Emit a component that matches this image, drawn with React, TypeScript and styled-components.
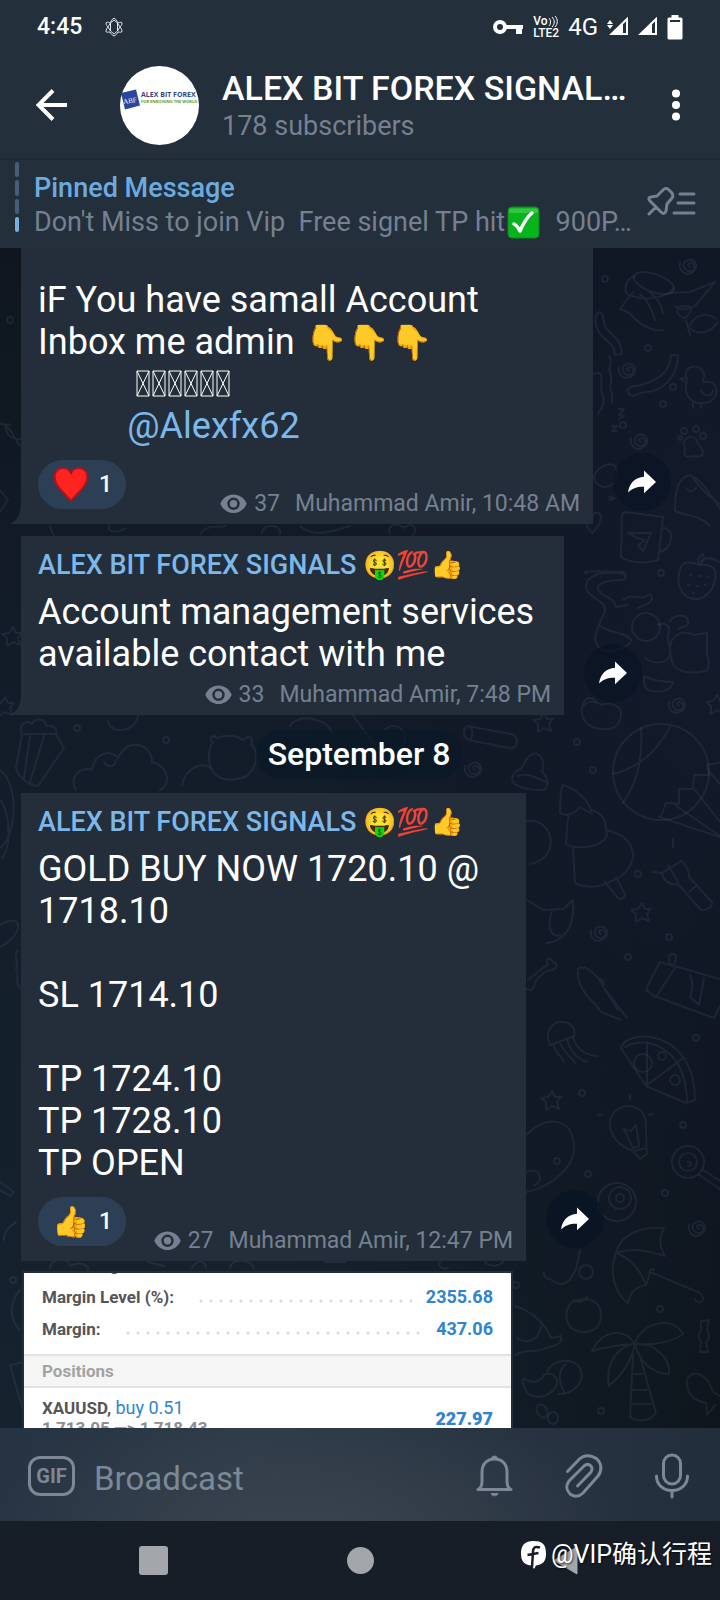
import React from "react";
import styled, { createGlobalStyle, css } from "styled-components";

const color = {
  bar: "#242f3c",
  bubble: "#232e3a",
  accent: "#7cb8ea",
  muted: "#758190",
  text: "#ffffff",
};

const Global = createGlobalStyle`
  *, *::before, *::after { box-sizing: border-box; }
  body {
    margin: 0;
    background: #171e28;
    color: ${color.text};
    font-family: Roboto, "Noto Sans CJK SC", "Noto Color Emoji", sans-serif;
  }
  h1, h2, p, dl, dd, dt { margin: 0; font: inherit; }
  svg { display: block; flex: none; }
`;

const plainButton = css`
  border: 0;
  padding: 0;
  background: none;
  color: inherit;
  font: inherit;
  display: grid;
  place-items: center;
  flex: none;
`;

const Screen = styled.div`
  min-height: 100vh;
  display: flex;
  flex-direction: column;
  background: ${color.bar};
`;

/* ---------- status bar ---------- */

const StatusBar = styled.div`
  height: 54px;
  padding: 0 37px;
  display: flex;
  align-items: center;
  gap: 23px;
`;

const Clock = styled.time`
  font-size: 23px;
  line-height: 26px;
  font-weight: 500;
`;

const StatusIcons = styled.div`
  margin-left: auto;
  display: flex;
  align-items: center;
  gap: 9px;
  font-size: 24px;
  line-height: 28px;
`;

/* ---------- channel header ---------- */

const ChannelBar = styled.header`
  height: 104px;
  padding: 0 39px 2px 36px;
  display: flex;
  align-items: center;
`;

const IconButton = styled.button`
  ${plainButton}
`;

const Avatar = styled.svg`
  margin-left: 53px;
`;

const ChannelTitles = styled.div`
  flex: 1;
  min-width: 0;
  margin-left: 23px;
  display: flex;
  flex-direction: column;
`;

const ChannelName = styled.h1`
  font-size: 34px;
  line-height: 42px;
  font-weight: 500;
  white-space: nowrap;
`;

const ChannelInfo = styled.p`
  font-size: 27px;
  line-height: 34px;
  color: ${color.muted};
`;

const PinnedBar = styled.section`
  height: 90px;
  padding: 2px 24px 0 15px;
  border-top: 2px solid #1f2934;
  display: flex;
  align-items: center;
  gap: 15px;
`;

const PinnedMarks = styled.div`
  width: 4px;
  align-self: stretch;
  padding-bottom: 16px;
  display: flex;
  flex-direction: column;
  gap: 3px;
`;

const PinnedMark = styled.i<{ $active?: boolean }>`
  flex: 1;
  border-radius: 2px;
  background: ${(p) => (p.$active ? "#76b0e2" : "#435f79")};
`;

const PinnedText = styled.div`
  flex: 1;
  min-width: 0;
  font-size: 27px;
  line-height: 34px;
`;

const PinnedTitle = styled.h2`
  color: #6cabdf;
  font-weight: 500;
`;

const PinnedPreview = styled.p`
  color: ${color.muted};
  white-space: pre;
  display: flex;
  align-items: center;
  gap: 2px;
`;

const PinnedListButton = styled.button`
  ${plainButton}
  padding-bottom: 6px;
`;

/* ---------- conversation ---------- */

const Chat = styled.main`
  position: relative;
  isolation: isolate;
  flex: 1 0 1180px;
  height: 1180px;
  overflow: hidden;
  padding-left: 21px;
  display: flex;
  flex-direction: column;
  background:
    radial-gradient(ellipse 60% 70% at 100% 30%, #131a2b, transparent),
    linear-gradient(90deg, transparent 40%, #0e151d 100%),
    linear-gradient(180deg, #0f161f 0%, #121c28 35%, #15232f 100%);
`;

const Wallpaper = styled.svg`
  position: absolute;
  top: 0;
  left: 0;
  width: 100%;
  height: 100%;
  z-index: -1;
  fill: none;
  stroke: #8695b4;
  stroke-opacity: 0.11;
  stroke-width: 2;
  stroke-linecap: round;
  stroke-linejoin: round;
`;

const MessageRow = styled.article`
  display: flex;
  align-items: flex-end;
  gap: 20px;
  margin-bottom: 12px;
`;

const Bubble = styled.div<{ $width: number; $top?: number }>`
  position: relative;
  width: ${(p) => p.$width}px;
  max-width: calc(100% - 100px);
  padding: ${(p) => p.$top ?? 13}px 13px 6px 17px;
  background: ${color.bubble};
`;

const Tail = styled.svg`
  position: absolute;
  left: -10px;
  bottom: 0;
  fill: ${color.bubble};
`;

const Sender = styled.h2`
  margin-bottom: 10px;
  font-size: 27px;
  line-height: 32px;
  font-weight: 500;
  color: ${color.accent};
  white-space: nowrap;
`;

const Body = styled.p`
  font-size: 36px;
  line-height: 42px;
  white-space: pre-wrap;
`;

const InlineEmoji = styled.span`
  margin-left: 2px;
  font-size: 34px;
  line-height: 34px;
`;

const MissingGlyphs = styled.svg`
  display: inline-block;
  vertical-align: -1px;
`;

const Mention = styled.a`
  color: ${color.accent};
  text-decoration: none;
`;

const Footer = styled.footer`
  margin-top: 6px;
  display: flex;
  align-items: flex-end;
  justify-content: flex-end;
`;

const Reaction = styled.button`
  ${plainButton}
  grid-auto-flow: column;
  gap: 9px;
  height: 49px;
  padding: 0 14px;
  margin: 7px auto 9px 0;
  border-radius: 25px;
  background: #2c3f54;
  font-size: 23px;
  line-height: 28px;
  font-weight: 500;
`;

const ReactionEmoji = styled.span`
  width: 38px;
  font-size: 30px;
  line-height: 36px;
`;

const Meta = styled.div`
  display: flex;
  align-items: center;
  gap: 7px;
  font-size: 23px;
  line-height: 28px;
  color: ${color.muted};
  white-space: nowrap;
`;

const Author = styled.span`
  margin-left: 8px;
`;

const ShareButton = styled.button`
  ${plainButton}
  width: 58px;
  height: 58px;
  margin-bottom: 13px;
  border-radius: 50%;
  background: rgba(9, 20, 36, 0.7);
`;

const DateChip = styled.time`
  align-self: center;
  margin: 3px 23px 14px 0;
  padding: 0 12px;
  border-radius: 24px;
  background: rgba(9, 24, 40, 0.65);
  font-size: 32px;
  line-height: 49px;
  font-weight: 500;
`;

/* ---------- attached trading statement ---------- */

const Statement = styled.figure`
  width: 491px;
  max-width: calc(100% - 100px);
  margin: -2px 0 0 1px;
  border: 2px solid ${color.bubble};
  border-bottom: 0;
  flex: 1;
  overflow: hidden;
  background: #fff;
  color: #555;
  font-size: 17px;
  line-height: 32px;
  font-weight: 700;
`;

const Summary = styled.dl`
  margin-top: -24px;
  padding: 0 18px 9px;
  border-bottom: 2px solid #e2e2e2;
`;

const SummaryRow = styled.div`
  display: flex;
`;

const Leader = styled.span`
  flex: 1;
  margin: 0 14px 0 22px;
  background: radial-gradient(circle, #dcdcdc 1px, transparent 2px) 0 4px / 10px 32px;
`;

const Amount = styled.dd`
  color: #2f84d0;
  font-size: 18px;
`;

const PositionsTitle = styled.h2`
  padding: 0 18px;
  background: #f5f5f5;
  border-bottom: 2px solid #e2e2e2;
  color: #a3a3a3;
  line-height: 30px;
`;

const Position = styled.div`
  padding: 10px 18px;
  display: flex;
  justify-content: space-between;
  line-height: 20px;
`;

const Side = styled.span`
  color: #2f84d0;
  font-weight: 400;
  font-size: 18px;
`;

const Prices = styled.p`
  color: #8d8d8d;
`;

const Profit = styled.strong`
  padding-top: 11px;
  color: #2f84d0;
  font-size: 18px;
`;

/* ---------- composer and navigation ---------- */

const Composer = styled.form`
  height: 93px;
  padding: 2px 31px 0 28px;
  display: flex;
  align-items: center;
  color: #7c8895;
  background:
    radial-gradient(ellipse 45% 150% at 42% 120%, #3b444f, transparent),
    linear-gradient(90deg, #263342, #2d3a48 35%, #232e3c);
`;

const GifButton = styled.button`
  ${plainButton}
  width: 47px;
  height: 40px;
  border: 3px solid currentColor;
  border-radius: 12px;
  font-size: 20px;
  line-height: 24px;
  font-weight: 700;
`;

const MessageInput = styled.input`
  flex: 1;
  min-width: 0;
  margin: 0 19px;
  padding: 6px 0 0;
  border: 0;
  outline: 0;
  background: none;
  color: ${color.text};
  font: 400 33px/40px Roboto, sans-serif;
  &::placeholder { color: #7c8895; opacity: 1; }
`;

const ComposerActions = styled.div`
  display: flex;
  align-items: center;
  gap: 52px;
`;

const NavBar = styled.nav`
  position: relative;
  height: 79px;
  padding: 0 7%;
  display: flex;
  align-items: center;
  background: #171e28;
`;

const NavButton = styled.button`
  ${plainButton}
  flex: 1;
  color: #a3a6ab;
`;

const Credit = styled.div`
  position: absolute;
  right: 8px;
  top: 16px;
  display: flex;
  align-items: center;
  gap: 5px;
  font-size: 25px;
  line-height: 36px;
  text-shadow: 1px 1px 2px rgba(0, 0, 0, 0.7);
`;

/* ---------- drawings ---------- */

const Eye = () => (
  <svg width="27" height="20" viewBox="0 0 27 20" aria-hidden="true">
    <path fillRule="evenodd" fill="currentColor" d="M13.500 .5C7.500 .5 2.500 4.200 .3 9.700c2.200 5.500 7.200 9.300 13.200 9.300s11-3.800 13.200-9.300C24.500 4.200 19.500 .5 13.500 .5Zm0 15.500a6.200 6.200 0 1 1 0-12.400 6.200 6.200 0 0 1 0 12.400Z" />
    <circle cx="13.500" cy="9.800" r="3.700" fill="currentColor" />
  </svg>
);

const Heart = () => (
  <svg width="38" height="37" viewBox="0 0 38 37" aria-label="heart">
    <path d="M19 35C13 27.500 2.500 20 2.500 11 2.500 5.500 6.300 2 10.800 2c3.500 0 6.500 1.800 8.200 5 1.700-3.200 4.700-5 8.200-5 4.500 0 8.300 3.500 8.300 9C35.500 20 25 27.500 19 35Z" fill="#ff2420" stroke="#ad1220" strokeWidth="2" />
  </svg>
);

const CheckMark = () => (
  <svg width="33" height="33" viewBox="0 0 33 33" aria-label="check mark">
    <rect x="1" y="1" width="31" height="31" rx="4" fill="#06b51c" stroke="#0b8a17" strokeWidth="1" />
    <path d="M3 2.500h27a2 2 0 0 1 1 2V7H2V4.500a2 2 0 0 1 1-2Z" fill="#4ed35c" opacity=".6" />
    <path d="M7 18c2.500 1 4 3.500 6 7C16 18 19.500 11.500 25 7" fill="none" stroke="#fff" strokeWidth="3.500" strokeLinecap="round" strokeLinejoin="round" />
  </svg>
);

const ShareArrow = () => (
  <svg width="30" height="26" viewBox="0 0 30 26" aria-hidden="true">
    <path d="M17 1.500v6.300C8 8.500 2.500 14 1 23.500c4-4 9-6 16-5.800v6.500L29 13 17 1.500Z" fill="#fff" />
  </svg>
);

const Flower = () => (
  <svg width="18" height="20" viewBox="0 0 18 20" fill="none" stroke="#dfe6ee" strokeWidth="1" aria-hidden="true">
    <path d="M9 1C6 3 6 5 5 6 3 5 1 5 1 6c0 2 1 3 2 4-1 1-2 3-2 4 0 2 2 1 4 1 1 2 2 3 4 4 2-1 3-2 4-4 2 0 4 1 4-1 0-1-1-3-2-4 1-1 2-2 2-4 0-1-2-1-4 0-1-1-1-3-4-5Z" />
    <path d="M9 3 5.500 6v8L9 17l3.500-3V6ZM3 10l2.500-4M3 10l2.500 4M15 10l-2.500-4M15 10l-2.500 4" />
  </svg>
);

const KeyIcon = () => (
  <svg width="31" height="15" viewBox="0 0 31 15" aria-hidden="true">
    <circle cx="7" cy="7" r="5" fill="none" stroke="#fff" strokeWidth="4" />
    <path d="M12 5h18v4h-1v5h-6V9H12Z" fill="#fff" />
  </svg>
);

const VolteMark = styled.span`
  display: grid;
  font-size: 12px;
  line-height: 11px;
  font-weight: 500;
`;

const VolteTop = styled.span`
  display: flex;
`;

const SignalIcon = ({ data }: { data?: boolean }) => (
  <svg width={data ? 22 : 20} height="20" viewBox={data ? "-3 0 22 20" : "-1 0 20 20"} aria-hidden="true">
    <path d="M17 2v15H1.500Z" fill="none" stroke="#fff" strokeWidth="2" />
    <path d="M13 5.500V18H1Z" fill="#fff" />
    {data && <path d="m0 3 3 4h-6Zm0 9 3-4h-6Z" fill="#fff" />}
  </svg>
);

const BatteryIcon = () => (
  <svg width="16" height="25" viewBox="0 0 16 25" aria-hidden="true">
    <path d="M4.500 0h7v2.500H14a1.500 1.500 0 0 1 1.500 1.500v19A1.500 1.500 0 0 1 14 24.500H2A1.500 1.500 0 0 1 .5 23V4A1.500 1.500 0 0 1 2 2.500h2.500Z" fill="#fff" />
    <path d="M3 6h10" stroke="#242f3c" strokeWidth="2" />
  </svg>
);

const dot = (x: number, y: number) => <circle key={`${x}-${y}`} cx={x} cy={y} r="3" />;
const spiral = (x: number, y: number) => (
  <path key={`${x}-${y}`} transform={`translate(${x} ${y})`} d="M0 2c-3-1-2-5 1-4 5 1 4 8-1 8-7 0-8-8-4-10 5-4 11 1 10 6-1 6-8 8-12 6-3-2-5-5-4-10" />
);
const star = (x: number, y: number) => (
  <path key={`${x}-${y}`} transform={`translate(${x} ${y})`} d="m1-9 3 6 6 0-4 5 2 7-7-3-6 4 0-8-5-4 7-1Z" />
);

const Doodles = () => (
  <Wallpaper viewBox="0 248 720 1180" preserveAspectRatio="xMaxYMin slice" aria-hidden="true">
    {[[605, 279], [648, 348], [673, 387], [663, 404], [623, 425], [661, 573], [577, 742], [593, 770], [628, 957], [669, 937], [696, 1038], [582, 1093], [683, 1125], [557, 1161], [588, 1174], [665, 1193], [660, 1309], [601, 1411], [77, 728], [166, 740], [516, 1285], [638, 874], [10, 320], [13, 1280]].map(([x, y]) => dot(x, y))}
    {[[690, 265], [629, 369], [641, 440], [679, 704], [475, 768], [601, 932], [699, 1227]].map(([x, y]) => spiral(x, y))}
    {[[543, 722], [641, 912], [551, 1100], [716, 704], [12, 636], [4, 706]].map(([x, y]) => star(x, y))}

    {/* hat and bird */}
    <ellipse cx="654" cy="283" rx="21" ry="9" transform="rotate(20 654 283)" />
    <path d="M634 276c-10 5-12 18-2 20 15 5 35 2 42-8M633 292l-13 17c6 2 11 4 14 9 8 8 20 14 30 12M640 294c8 6 12 16 15 26M650 292c6 6 12 12 13 21M668 293l22-1 25-10-20 24c-10 5-16 4-20 0M690 325c6-12 18-12 26-6M684 318c-10-3-8-15 0-11 7-5 11 6 0 11ZM688 326c8 10 22 8 30-4M686 320l4 15" />
    {/* streamers */}
    <path d="M597 313c8-4 5 10 9 15 6 8 15 10 16 26l-7 1c0-12-10-14-15-21-5-8-6-15-3-21ZM609 356c5 8-2 10 1 17 4 8-2 11 1 18 4 5-1 8 1 12M671 355l7 0c0 24-18 37-33 37-9 1-10 6-15 3l-3-5c5-6 11-3 17-6 13-4 26-11 27-29ZM594 374c12-6 5 12 8 20 5 9-2 16-4 20" />
    {/* chick */}
    <path d="M687 379c-6-14 14-17 17-5 1 5-3 7 0 8 14-3 17 14 5 20-11 4-20-1-23-10-1-6 0-9 1-13ZM686 378l-6 1 5 3M701 391c5 7 11 5 12-1M693 403v5M701 403v5" />
    <path d="m619 409 5 0-5 6 5 1-5 3M612 426h5l-5 5h5" />
    {/* paw */}
    <path d="M684 442c3-7 13-6 13 0l6 9c0 8-6 5-10 5-5 2-11 0-8-6Z" />
    <circle cx="684" cy="431" r="3" /><circle cx="696" cy="429" r="3" /><circle cx="703" cy="436" r="3" /><circle cx="680" cy="438" r="2" />
    {/* fish and whale */}
    <path d="M594 476c6-12 17-14 22-9 2 12-3 20-12 20-6-1-10-5-10-11ZM609 497l6 1-5 2M675 511c0-21 3-34 15-36 14 6 21 22 30 33M675 511c10 5 24 3 35 15M687 489c3 4 7 2 9-1M692 476c8 14 18 20 28 28" />
    {/* mug */}
    <path d="m622 514 3-2 38 5-5 43c-12 4-28 3-37-3ZM662 528c14-1 11 22-3 24M628 533l23 0-8 18-5-6 7-5-8-2ZM592 533c-8-8-6-15 0-16 3-7 8-5 9 0-1 8-5 12-9 16Z" />
    {/* strawberry */}
    <path d="M681 567c4-7 12-4 19-2 12-1 18 4 15 14-2 14-12 21-22 20-15-3-17-20-12-32ZM699 564c-2-4 0-8 4-10 2 5 0 9-4 10Zm0 0c6-9 14-6 20-2M690 575h1m8 1h1m7 1h1m-20 8h1m8 1h1m7-1h1m-13 8h1" />
    {/* playing cats */}
    <path d="M624 574c-18-4-38 0-38 13 2 12 20 12 19 24-9 20-14 30-5 37 10 8 32-2 31-8-4-8-25-8-31-14M587 573c-8-2 5-2 37-1 3 3 1 8-2 8-12 0-26 2-24 10 4 8 15 5 18 17l12-2M623 600c6-6 14-2 22-3 4-4 7-3 7 2-2 6-10 7-14 9" />
    <circle cx="646" cy="627" r="14" />
    <path d="M658 625c8-4 14 2 10 10-2 8 4 10 2 20-4 10-17 9-25 3M672 640c8-10 14-8 22-5l13-2v21c3 8 2 15-1 17-14 3-30 2-34-9-2-8-3-17 0-22ZM670 622c2-8 16-8 18-2 1 8-6 6-10 9M644 676c8 4 16 6 29 6-2 9-12 11-20 9-8 0-10-8-9-15Z" />
    {/* fruit and log */}
    <path d="M582 707c5-7 14-6 20-2 9-3 20 0 19 11-2 12-10 14-20 13-13-1-21-10-19-22ZM583 704c3-8 9-7 13-3M468 726l42 8c9 0 10 16-1 14l-40-8c-7-2-6-13-1-14ZM468 726c6 1 5 13 1 14" />
    {/* bell */}
    <path d="M536 753c-10 2-11 10-15 16-10 2-11 13-5 16 10 5 20 5 29 5 4-7 3-13-3-18 3-8 2-14-6-19ZM518 776c8-4 18 2 28 6" />
    {/* balloon */}
    <circle cx="661" cy="772" r="48" />
    <path d="M641 728c2 28-3 54-18 75M613 774c27-7 43-22 57-47M661 816l5-13 13 1 0-15h14l1-14h15l-2-10 12-2M659 817l61 20M675 805l45 31M695 790l25 32M708 770l12 14" />
    {/* tree */}
    <path d="M563 785c-4 8-2 20-3 28 7 4 14 1 20-6l12 7c-2-14-18-26-29-29ZM569 814c-2 8-2 20-3 30 12 6 34 4 41-8l-2-14c-2-7-7-9-12-12M573 848l2 35c12 6 28 4 36-2 12-3 22-15 22-27-2-15-12-20-27-24M605 882l13 16c4 3 7-1 7-4l-9-17M527 821c28-3 34 38 3 43" />
    {/* torch */}
    <path d="m662 873 19-12c5 3 8 10 8 16l23 25c1 5-6 9-11 8l-23-26c-8 2-15-4-16-11ZM668 865l10 17M697 885l-8 7M673 847v-8M661 873l-8-1" />
    {/* cat face, bone, squid */}
    <path d="M527 900l16 10 20-1 10-9c2 24-7 42-27 43M552 911c-6 18 0 27 9 24M528 980l20-16c-4-6 3-7 5-2 4 1 5 5 0 8-5 0-8 0-18 12-1 9-6 9-8 7M578 969c4-5 18 2 26 19l23 30M578 969c-2 12 5 24 18 36l5 7 20 8M604 988l14 22M598 978c4 2 6 4 6 6" />
    {/* jellyfish */}
    <path d="M550 1045c-6-14 3-25 14-23 7 1 12 7 10 14ZM554 1045c0 8 7 9 10 17M560 1043c3 8 9 12 15 20M567 1040c3 10 8 18 20 22M573 1037c4 14 14 18 24 19" />
    {/* present */}
    <path d="M660 962c-5 10-10 18-14 28l8 6 60 22 6-12M660 962l60 17M656 997l20-31M672 966c-6-8-2-14 2-12 4 2 2 8-2 12ZM690 975c4 8 2 16 0 22l9 8 5-27" />
    {/* pizza */}
    <path d="M621 1048c6-20 74-20 74 52l-9 3-40-17ZM625 1047c14-10 60-7 62 54M647 1042v43l35-26" /><circle cx="643" cy="1063" r="9" /><circle cx="675" cy="1080" r="5" /><circle cx="662" cy="1056" r="4" />
    {/* light bulb */}
    <path d="M610 1126c-2-24 35-28 36-2 0 11 0 18 1 30l-7 5-7-8c-11-4-21-12-23-25ZM624 1129l9 19 6-2-3-21-5 6ZM634 1151l12-3M602 1115h-4M630 1100v-5M649 1115l4-1" />
    {/* potato, lollipop, sweet */}
    <path d="M527 1134c22-20 44-15 47 10 2 24-24 43-47 48M527 1172c12-6 18 8 8 13" />
    <circle cx="688" cy="1162" r="16" /><circle cx="688" cy="1162" r="9" /><path d="m703 1170 17 11M699 1175l21 14M688 1162c4-2 4 4 0 4" />
    <circle cx="617" cy="1202" r="19" /><circle cx="620" cy="1198" r="11" /><circle cx="620" cy="1198" r="4" />
    {/* yo-yo and umbrella */}
    <path d="M580 1250l-4 19c-8 20-18 16-26 10-6-1-6-4-6-7" /><circle cx="586" cy="1272" r="7" />
    <path d="M616 1253c4-18 24-27 48-25-6 12-4 20 1 28-22-7-36-8-49-3ZM616 1253c-8 20 0 42 12 50 3-12 8-16 18-18-6-15-14-26-30-32ZM646 1285c6-14 2-18 8-15M650 1272l50 21c8 8-2 13-5 6" />
    {/* tomato, whale, palm */}
    <path d="M571 1303c10-6 29-6 30 11 0 15-10 19-20 18-16-2-18-20-10-29ZM573 1300l8 2 6-5M515 1306c18 6 30 18 36 32l10-2c2 9-8 10-15 12-10 6-20 0-31 7M517 1338c8 6 22 4 24-12" />
    <path d="M635 1344c-10-16-32-15-43 7 12-4 26-6 43-7Zm0 0c4-20 38-30 48-10-10 8-32 12-48 10Zm0 0c-18 2-30 20-26 42 12-10 22-24 26-42Zm0 0c16-2 36 12 34 30-16 0-30-12-34-30ZM633 1355l-3 62c8 6 20 4 26-4l-17-60M632 1374h10M631 1390h16M631 1404h20" />
    {/* croissants, sweets, fish */}
    <path d="M525 1379c8 6 16 2 20-5 10-2 15 6 10 14-8 12-32 14-32-9ZM547 1372c4-12 25-16 33-4 6 14-6 26-22 26M566 1364c-10 8-6 20-2 28M701 1321l8-1-2 10c4 6 2 10-1 12l2 10h-8l1-10c-4-6-3-8 0-11ZM688 1377c10-8 20 0 25 15l7 4M688 1377c-4 16 6 24 18 26l1 12 8-10" />
    <ellipse cx="542" cy="1411" rx="5" ry="7" transform="rotate(-30 542 1411)" /><ellipse cx="553" cy="1418" rx="5" ry="6" />

    {/* popcorn, trees and bear between the bubbles, then the left margin */}
    <path d="M22 734c-4-8 4-16 10-10 4-8 14-4 14 2 8-2 12 4 10 8l8 14-26 38c-12-2-20-10-22-18l6-34ZM24 734l32 0M30 736l-6 42M44 736l-14 46M108 721c2 14 28 12 30-6M76 790c-8-14 6-24 16-20 2-16 18-22 26-12 10-22 34-14 34 4 16 4 20 22 8 28M116 760c-2 10-10 6-12 2M213 742c-6-4 0-8 4-4 12-4 20-2 26 2 6-6 12-2 8 4 10 10 4 24-4 32-20 8-32 2-36-8-4-12-2-20 2-26ZM182 785c4-18 20-24 30-16M290 726c6-12 34-10 42 6M352 714l22 30M384 730c12-10 24 0 20 14" />
    <path d="M10 425c-6-6-8 16 12 14M0 424c8-2 14 14 20 22M0 490l8 10-8 12M0 770c20 14 16 68 0 78M0 800c10 12 12 46 2 58M0 925c24-14 24 10 0 22M18 950c-6 8 2 10-2 18 4 8-2 14 4 20M0 1182l14 10-4 4-10-6M4 1240c0-12 8-14 12-18M20 1290c-12 14-10 30 0 40M10 1365l20-4M10 1365l12 42" />
    <path d="M50 526c2 8 4 12 14 16M110 524c-6 8 8 10 16 4M200 534c8-10 14-6 26-8M262 534c0-12 20-10 18 0M300 526c10 8 20 10 50 0M390 534c-4-10 8-12 14-6 8-8 16 2 8 8M50 1268c2-12 20-10 20-2 10-6 20 0 18 4M148 1262l16 4M192 1268c4-8 14-8 14 0M230 1268c2-10 20-10 24 0M325 1262h20M440 1262c-2 4 2 8 8 6M485 1262c6 6 14 4 18 0" />
  </Wallpaper>
);

const BubbleTail = () => (
  <Tail width="11" height="22" viewBox="0 0 11 22" aria-hidden="true">
    <path d="M10 0h1v22H0v-1C7 18 10 11 10 0Z" />
  </Tail>
);

const Stats = ({ views, time }: { views: number; time: string }) => (
  <Meta>
    <Eye />
    <span>{views}</span>
    <Author>Muhammad Amir, {time}</Author>
  </Meta>
);

const Share = () => (
  <ShareButton type="button" aria-label="Share message">
    <ShareArrow />
  </ShareButton>
);

const senderName = "ALEX BIT FOREX SIGNALS 🤑💯👍";

export default function App() {
  return (
    <Screen>
      <Global />
      <StatusBar>
        <Clock>4:45</Clock>
        <Flower />
        <StatusIcons>
          <KeyIcon />
          <VolteMark>
            <VolteTop>
              Vo
              <svg width="11" height="12" viewBox="0 0 11 12" fill="none" stroke="#fff" strokeWidth="1" aria-hidden="true">
                <path d="M1 2c2 2 2 6 0 8M4 1c3 3 3 7 0 10M7 0c3 3 3 8 0 11" />
              </svg>
            </VolteTop>
            <span>LTE2</span>
          </VolteMark>
          <span>4G</span>
          <SignalIcon data />
          <SignalIcon />
          <BatteryIcon />
        </StatusIcons>
      </StatusBar>

      <ChannelBar>
        <IconButton type="button" aria-label="Back">
          <svg width="31" height="32" viewBox="0 0 31 32" fill="none" stroke="#fff" strokeWidth="4" aria-hidden="true">
            <path d="M31 16H3M17 1.500 2.500 16 17 30.500" />
          </svg>
        </IconButton>
        <Avatar width="79" height="79" viewBox="0 0 79 79" role="img" aria-label="Channel logo">
          <circle cx="39.500" cy="39.500" r="39.500" fill="#fff" />
          <path d="m1 27 15-3.500 4 16-15 4Z" fill="#2b479d" />
          <text x="3" y="37" fontSize="7" fontFamily="Liberation Serif, serif" fill="#fff" transform="rotate(-8 10 34)">ABF</text>
          <text x="21" y="31" fontSize="7" fontWeight="700" fontFamily="Open Sans, sans-serif" fill="#37457f">ALEX BIT FOREX</text>
          <text x="21" y="37" fontSize="4" fontWeight="700" fontFamily="Open Sans, sans-serif" fill="#46a03c">FOR ENRICHING THE WORLD</text>
        </Avatar>
        <ChannelTitles>
          <ChannelName>ALEX BIT FOREX SIGNAL…</ChannelName>
          <ChannelInfo>178 subscribers</ChannelInfo>
        </ChannelTitles>
        <IconButton type="button" aria-label="More options">
          <svg width="10" height="32" viewBox="0 0 10 32" fill="#fff" aria-hidden="true">
            <circle cx="5" cy="4.500" r="4" /><circle cx="5" cy="16" r="4" /><circle cx="5" cy="27.500" r="4" />
          </svg>
        </IconButton>
      </ChannelBar>

      <PinnedBar>
        <PinnedMarks>
          <PinnedMark /><PinnedMark /><PinnedMark /><PinnedMark $active />
        </PinnedMarks>
        <PinnedText>
          <PinnedTitle>Pinned Message</PinnedTitle>
          <PinnedPreview>Don't Miss to join Vip  Free signel TP hit<CheckMark />  900P…</PinnedPreview>
        </PinnedText>
        <PinnedListButton type="button" aria-label="Pinned messages">
          <svg width="49" height="30" viewBox="0 0 49 30" fill="none" stroke="#758190" strokeWidth="3" strokeLinecap="round" strokeLinejoin="round" aria-hidden="true">
            <path d="M16 3c2-2 4-2 6 0l3 3c1 2 1 4 0 5l-5 6-1 7c-1 3-3 3-5 1L3 14c-2-2-1-4 1-4l6-1ZM9 20l-7 7M33 7h14M31 16h16M27 26h20" />
          </svg>
        </PinnedListButton>
      </PinnedBar>

      <Chat>
        <Doodles />

        <MessageRow>
          <Bubble $width={572} $top={31}>
            <BubbleTail />
            <Body>
              {"iF You have samall Account\nInbox me admin "}
              <InlineEmoji>👇👇👇</InlineEmoji>
              {"\n           "}
              <MissingGlyphs width="94" height="27" viewBox="0 0 94 27" fill="none" stroke="#fff" aria-hidden="true">
                {[0, 16, 32, 48, 64, 80].map((x) => (
                  <path key={x} transform={`translate(${x} 0)`} d="M1 1h12v25H1ZM1 1l12 25M13 1 1 26" />
                ))}
              </MissingGlyphs>
              {"\n          "}
              <Mention href="#alexfx62">@Alexfx62</Mention>
            </Body>
            <Footer>
              <Reaction type="button"><Heart />1</Reaction>
              <Stats views={37} time="10:48 AM" />
            </Footer>
          </Bubble>
          <Share />
        </MessageRow>

        <MessageRow>
          <Bubble $width={543}>
            <BubbleTail />
            <Sender>{senderName}</Sender>
            <Body>{"Account management services\navailable contact with me"}</Body>
            <Footer>
              <Stats views={33} time="7:48 PM" />
            </Footer>
          </Bubble>
          <Share />
        </MessageRow>

        <DateChip>September 8</DateChip>

        <MessageRow>
          <Bubble $width={505}>
            <Sender>{senderName}</Sender>
            <Body>{"GOLD BUY NOW 1720.10 @\n1718.10\n\nSL 1714.10\n\nTP 1724.10\nTP 1728.10\nTP OPEN"}</Body>
            <Footer>
              <Reaction type="button"><ReactionEmoji>👍</ReactionEmoji>1</Reaction>
              <Stats views={27} time="12:47 PM" />
            </Footer>
          </Bubble>
          <Share />
        </MessageRow>

        <Statement>
          <Summary>
            <SummaryRow><dt>Free Margin:</dt></SummaryRow>
            <SummaryRow><dt>Margin Level (%):</dt><Leader /><Amount>2355.68</Amount></SummaryRow>
            <SummaryRow><dt>Margin:</dt><Leader /><Amount>437.06</Amount></SummaryRow>
          </Summary>
          <PositionsTitle>Positions</PositionsTitle>
          <Position>
            <div>
              <p>XAUUSD, <Side>buy 0.51</Side></p>
              <Prices>1 713.05 —&gt; 1 718.43</Prices>
            </div>
            <Profit>227.97</Profit>
          </Position>
        </Statement>
      </Chat>

      <Composer onSubmit={(e) => e.preventDefault()}>
        <GifButton type="button" aria-label="GIF">GIF</GifButton>
        <MessageInput aria-label="Broadcast" placeholder="Broadcast" />
        <ComposerActions>
          <IconButton type="button" aria-label="Notifications">
            <svg width="37" height="44" viewBox="0 0 37 44" fill="none" stroke="currentColor" strokeWidth="3" strokeLinejoin="round" aria-hidden="true">
              <path d="M2 35.500c4-2 4-5 4-8V18C6 10 11 5 18.500 5S31 10 31 18v9.500c0 3 0 6 4 8Z" />
              <path d="M15.500 5a3 3 0 0 1 6 0ZM15 39.500h7c-1 3-6 3-7 0Z" fill="currentColor" strokeWidth="1" />
            </svg>
          </IconButton>
          <IconButton type="button" aria-label="Attach">
            <svg width="38" height="44" viewBox="0 0 38 44" fill="none" stroke="currentColor" strokeWidth="3" strokeLinecap="round" aria-hidden="true">
              <path d="M2.500 17.500 14.500 5C19 .5 26 .5 32 5c5 5 5 12 1 17L18 39c-4 4-9 4-13 1-4-4-4-9-1-13L19 12c5-4 10 1 7 6L12.500 32" />
            </svg>
          </IconButton>
          <IconButton type="button" aria-label="Record voice">
            <svg width="34" height="46" viewBox="0 0 34 46" fill="none" stroke="currentColor" strokeWidth="3" strokeLinecap="round" aria-hidden="true">
              <rect x="8.500" y="2" width="17" height="29" rx="8.500" />
              <path d="M1.500 23c0 9 7 14.500 15.500 14.500S32.500 32 32.500 23M17 38v6" />
            </svg>
          </IconButton>
        </ComposerActions>
      </Composer>

      <NavBar>
        <NavButton type="button" aria-label="Recent apps">
          <svg width="29" height="29" viewBox="0 0 29 29" aria-hidden="true"><rect width="29" height="29" rx="3" fill="currentColor" /></svg>
        </NavButton>
        <NavButton type="button" aria-label="Home">
          <svg width="27" height="27" viewBox="0 0 27 27" aria-hidden="true"><circle cx="13.500" cy="13.500" r="13.500" fill="currentColor" /></svg>
        </NavButton>
        <NavButton type="button" aria-label="Back">
          <svg width="26" height="29" viewBox="0 0 26 29" aria-hidden="true"><path d="M24 1v27L1 14.500Z" fill="currentColor" stroke="currentColor" strokeLinejoin="round" /></svg>
        </NavButton>
        <Credit>
          <svg width="25" height="28" viewBox="0 0 25 28" aria-hidden="true">
            <path d="M12.500 0C21 0 25 3 25 12.500c0 8-3 11-10 12L13 28l-2-3.500C3 24 0 20 0 12.500 0 4 4 0 12.500 0Z" fill="#fff" />
            <path d="M19 6.500c-5-1.500-7 0-7 4.500L11 26M6.500 14l11-2" fill="none" stroke="#171e28" strokeWidth="2.500" />
          </svg>
          <span>@VIP确认行程</span>
        </Credit>
      </NavBar>
    </Screen>
  );
}
